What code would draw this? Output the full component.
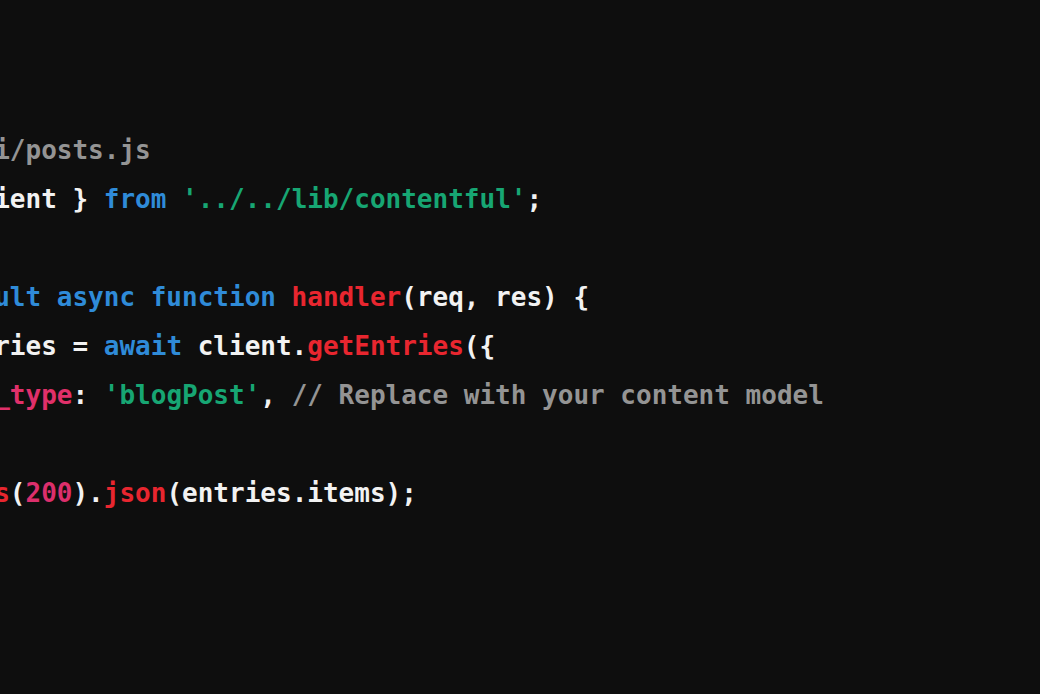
import React from "react";

const C = {
  kw: "text-[#2f8bd8]",
  fn: "text-[#e8262f]",
  prop: "text-[#e0306a]",
  num: "text-[#dc2f6c]",
  str: "text-[#17a673]",
  cm: "text-[#949494]",
  tx: "text-[#f2f2f2]",
};

export default function App() {
  return (
    <div className="w-[1040px] h-[694px] overflow-hidden bg-[#0e0e0e]">
      <pre className="ml-[-178px] pt-[126px] text-[26px] leading-[49px] font-bold whitespace-pre font-['DejaVu_Sans_Mono',monospace]">
        <code className="font-['DejaVu_Sans_Mono',monospace]">
          <div className={C.cm}>// pages/api/posts.js</div>
          <div>
            <span className={C.kw}>import</span>
            <span className={C.tx}> {"{"} client {"}"} </span>
            <span className={C.kw}>from</span>
            <span className={C.tx}> </span>
            <span className={C.str}>'../../lib/contentful'</span>
            <span className={C.tx}>;</span>
          </div>
          <div>&nbsp;</div>
          <div>
            <span className={C.kw}>export default async function </span>
            <span className={C.fn}>handler</span>
            <span className={C.tx}>(req, res) {"{"}</span>
          </div>
          <div>
            <span className={C.kw}>  const</span>
            <span className={C.tx}> entries = </span>
            <span className={C.kw}>await</span>
            <span className={C.tx}> client.</span>
            <span className={C.fn}>getEntries</span>
            <span className={C.tx}>({"{"}</span>
          </div>
          <div>
            <span className={C.prop}>    content_type</span>
            <span className={C.tx}>: </span>
            <span className={C.str}>'blogPost'</span>
            <span className={C.tx}>, </span>
            <span className={C.cm}>// Replace with your content model</span>
          </div>
          <div className={C.tx}>  {"}"});</div>
          <div>
            <span className={C.tx}>  res.</span>
            <span className={C.fn}>status</span>
            <span className={C.tx}>(</span>
            <span className={C.num}>200</span>
            <span className={C.tx}>).</span>
            <span className={C.fn}>json</span>
            <span className={C.tx}>(entries.items);</span>
          </div>
          <div className={C.tx}>{"}"}</div>
        </code>
      </pre>
    </div>
  );
}
